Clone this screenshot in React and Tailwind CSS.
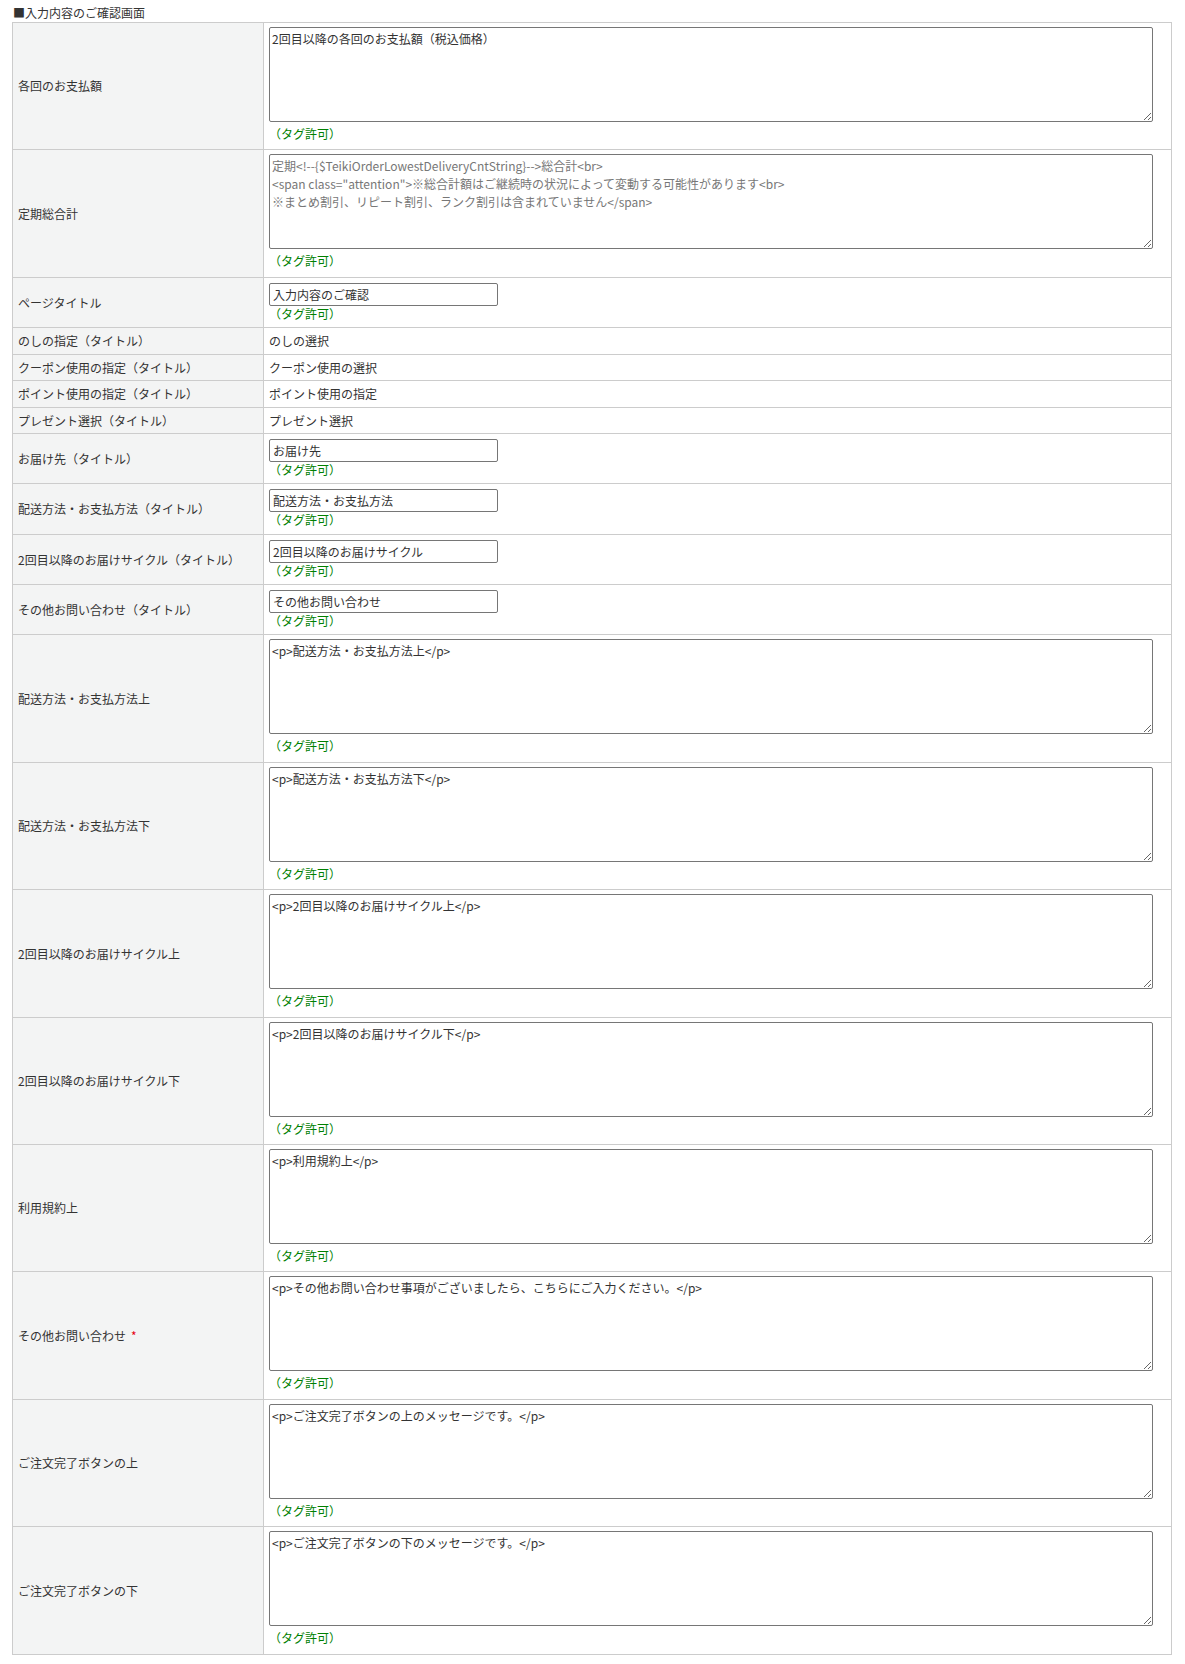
import React from "react";

const FONT = "font-['Meiryo','Noto_Sans_CJK_JP',sans-serif]";

const rows = [
  { type: "textarea", label: "各回のお支払額", value: "2回目以降の各回のお支払額（税込価格）" },
  {
    type: "textarea",
    label: "定期総合計",
    gray: true,
    value:
      '定期<!--{$TeikiOrderLowestDeliveryCntString}-->総合計<br>\n<span class="attention">※総合計額はご継続時の状況によって変動する可能性があります<br>\n※まとめ割引、リピート割引、ランク割引は含まれていません</span>',
  },
  { type: "input", label: "ページタイトル", value: "入力内容のご確認" },
  { type: "text", label: "のしの指定（タイトル）", value: "のしの選択" },
  { type: "text", label: "クーポン使用の指定（タイトル）", value: "クーポン使用の選択" },
  { type: "text", label: "ポイント使用の指定（タイトル）", value: "ポイント使用の指定" },
  { type: "text", label: "プレゼント選択（タイトル）", value: "プレゼント選択" },
  { type: "input", label: "お届け先（タイトル）", value: "お届け先" },
  { type: "input", label: "配送方法・お支払方法（タイトル）", value: "配送方法・お支払方法" },
  { type: "input", label: "2回目以降のお届けサイクル（タイトル）", value: "2回目以降のお届けサイクル" },
  { type: "input", label: "その他お問い合わせ（タイトル）", value: "その他お問い合わせ" },
  { type: "textarea", label: "配送方法・お支払方法上", value: "<p>配送方法・お支払方法上</p>" },
  { type: "textarea", label: "配送方法・お支払方法下", value: "<p>配送方法・お支払方法下</p>" },
  { type: "textarea", label: "2回目以降のお届けサイクル上", value: "<p>2回目以降のお届けサイクル上</p>" },
  { type: "textarea", label: "2回目以降のお届けサイクル下", value: "<p>2回目以降のお届けサイクル下</p>" },
  { type: "textarea", label: "利用規約上", value: "<p>利用規約上</p>" },
  {
    type: "textarea",
    label: "その他お問い合わせ",
    required: true,
    value: "<p>その他お問い合わせ事項がございましたら、こちらにご入力ください。</p>",
  },
  { type: "textarea", label: "ご注文完了ボタンの上", value: "<p>ご注文完了ボタンの上のメッセージです。</p>" },
  { type: "textarea", label: "ご注文完了ボタンの下", value: "<p>ご注文完了ボタンの下のメッセージです。</p>" },
];

const TagNote = ({ className = "" }) => (
  <div className={`text-[#008000] text-[12px] ${className}`}>（タグ許可）</div>
);

const ValueCell = ({ row }) => {
  if (row.type === "text") {
    return <td className="border border-[#cccccc] px-[5px] py-[4px] leading-[17.5px] align-middle">{row.value}</td>;
  }
  if (row.type === "input") {
    return (
      <td className="border border-[#cccccc] pl-[5px] pt-[5px] pb-[5px] align-top">
        <input
          type="text"
          defaultValue={row.value}
          className={`${FONT} block w-[229px] h-[23px] border border-[#767676] rounded-[2px] px-[3px] text-[12px] text-[#333] bg-white outline-none`}
        />
        <TagNote className="leading-[16.3px]" />
      </td>
    );
  }
  return (
    <td className="border border-[#cccccc] pl-[5px] pt-[4px] pb-[3px] align-top">
      <textarea
        defaultValue={row.value}
        className={`${FONT} block w-[884px] h-[95px] border border-[#767676] rounded-[2px] p-[2px] text-[12px] leading-[18px] bg-white outline-none ${
          row.gray ? "text-[#777777]" : "text-[#333]"
        }`}
      />
      <TagNote className="leading-[24.4px]" />
    </td>
  );
};

export default function App() {
  return (
    <div className={`${FONT} bg-white text-[12px] text-[#333] pl-[12px] pb-[12px] w-[1185px]`}>
      <div className="h-[22px] pt-[4px] pl-[1px] leading-[17px]">■入力内容のご確認画面</div>
      <table className="border-collapse w-[1160px] table-fixed">
        <colgroup>
          <col className="w-[251px]" />
          <col />
        </colgroup>
        <tbody>
          {rows.map((row) => (
            <tr key={row.label}>
              <td className="border border-[#cccccc] bg-[#f3f4f4] px-[5px] align-middle leading-[17.5px]">
                {row.label}
                {row.required && <span className="text-[#e60012] ml-[5px]">*</span>}
              </td>
              <ValueCell row={row} />
            </tr>
          ))}
        </tbody>
      </table>
    </div>
  );
}
